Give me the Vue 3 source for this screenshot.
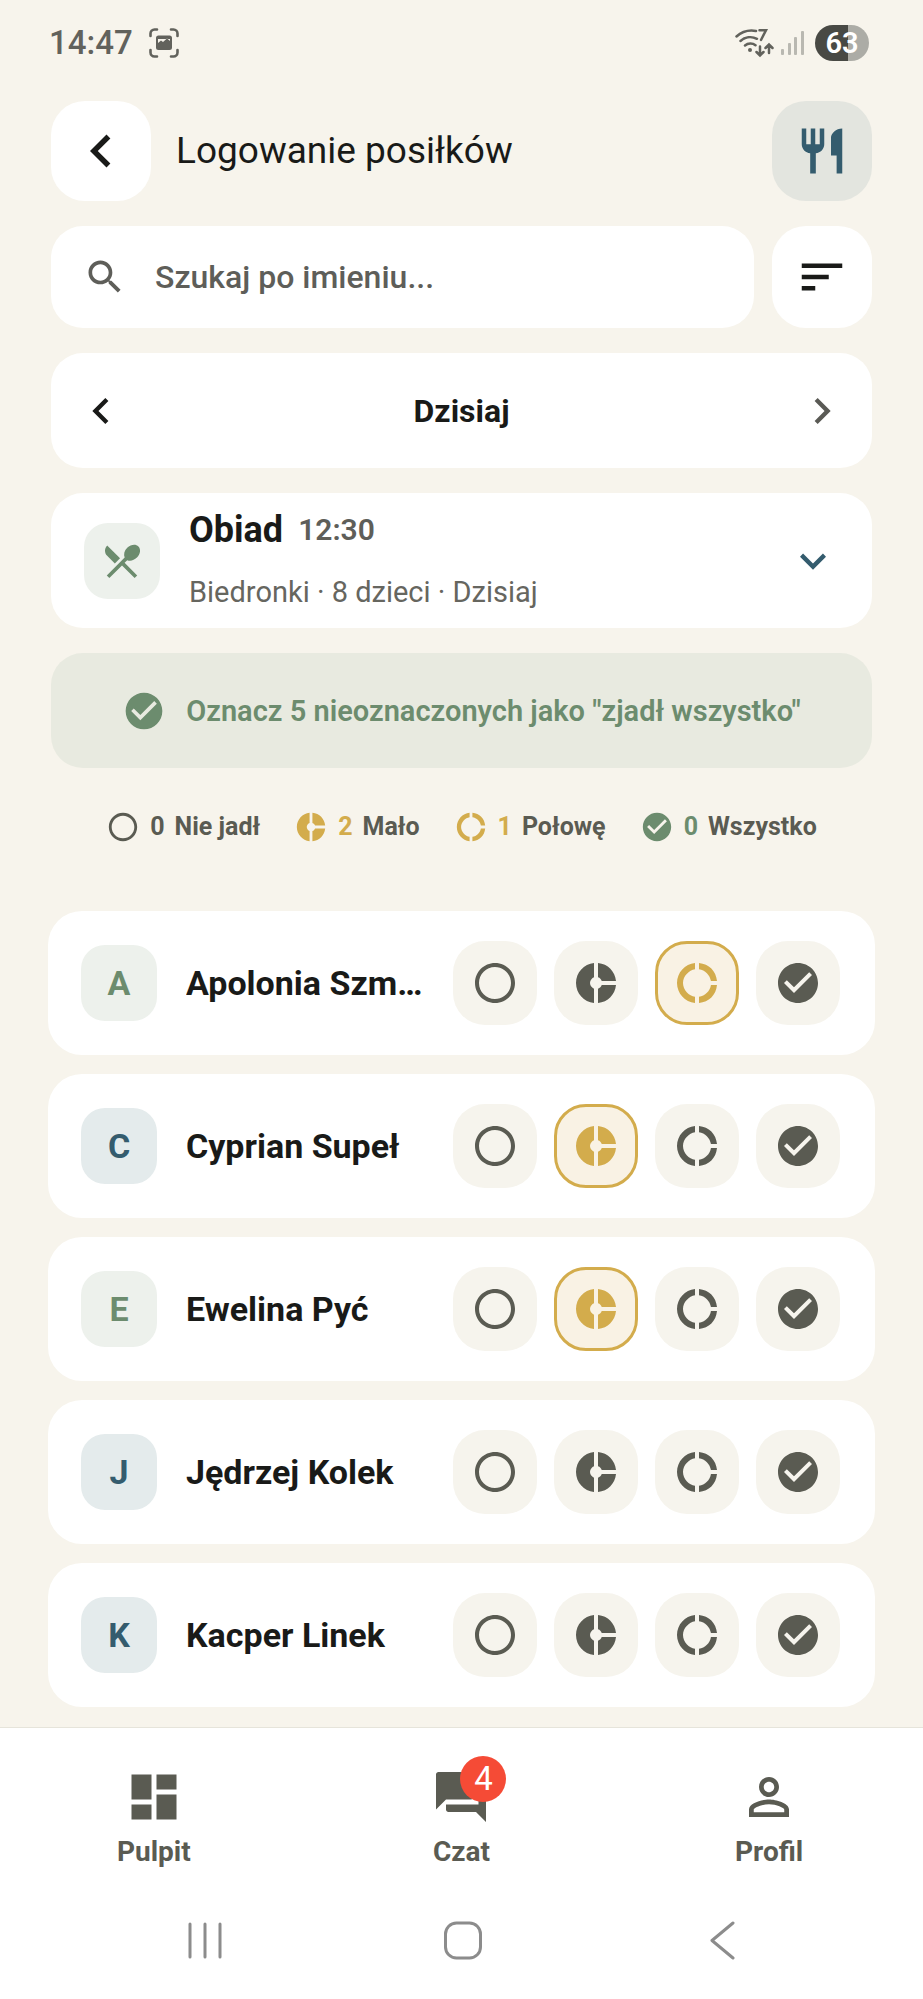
<script setup>
import { computed, ref } from 'vue'

const icons = {
  back: 'M15.41 7.41L14 6l-6 6 6 6 1.41-1.41L10.83 12z',
  forward: 'M10 6L8.59 7.41 13.17 12l-4.58 4.59L10 18l6-6z',
  expand: 'M16.59 8.59L12 13.17 7.41 8.59 6 10l6 6 6-6z',
  fork: 'M11 9H9V2H7v7H5V2H3v7c0 2.12 1.66 3.84 3.75 3.97V22h2.5v-9.03C11.34 12.84 13 11.12 13 9V2h-2v7zm5-3v8h2.5v8H21V2c-2.76 0-5 2.24-5 4z',
  search: 'M15.5 14h-.79l-.28-.27C15.41 12.59 16 11.11 16 9.5 16 5.91 13.09 3 9.5 3S3 5.91 3 9.5 5.91 16 9.5 16c1.61 0 3.09-.59 4.23-1.57l.27.28v.79l5 4.99L20.49 19l-4.99-5zm-6 0C7.01 14 5 11.99 5 9.5S7.01 5 9.5 5 14 7.01 14 9.5 11.99 14 9.5 14z',
  sort: 'M3 18h6v-2H3v2zM3 6v2h18V6H3zm0 7h12v-2H3v2z',
  lunch: 'M8.1 13.34l2.83-2.83L3.91 3.5c-1.56 1.56-1.56 4.09 0 5.66l4.19 4.18zm6.78-1.81c1.53.71 3.68.21 5.27-1.38 1.91-1.91 2.28-4.65.81-6.12-1.46-1.46-4.2-1.1-6.12.81-1.59 1.59-2.09 3.74-1.38 5.27L3.7 19.87l1.41 1.41L12 14.41l6.88 6.88 1.41-1.41L13.41 13l1.47-1.47z',
  none: 'M12 2C6.48 2 2 6.48 2 12s4.48 10 10 10 10-4.48 10-10S17.52 2 12 2zm0 18c-4.42 0-8-3.58-8-8s3.58-8 8-8 8 3.58 8 8-3.58 8-8 8z',
  little: 'M11 9.16V2c-5 .5-9 4.79-9 10s4 9.5 9 10v-7.16c-1-.41-2-1.52-2-2.84s1-2.43 2-2.84zM14.86 11H22c-.48-4.75-4-8.53-9-9v7.16c1 .3 1.52.98 1.86 1.84zM13 14.84V22c5-.47 8.52-4.25 9-9h-7.14c-.34.86-.86 1.54-1.86 1.84z',
  half: 'M11 5.08V2c-5 .5-9 4.81-9 10s4 9.5 9 10v-3.08c-3-.48-6-3.4-6-6.92s3-6.44 6-6.92zM18.97 11H22c-.47-5-4-8.53-9-9v3.08c3 .43 5.54 2.92 5.97 5.92zM13 18.92V22c5-.47 8.53-4 9-9h-3.03c-.43 3-2.97 5.49-5.97 5.92z',
  all: 'M12 2C6.48 2 2 6.48 2 12s4.48 10 10 10 10-4.48 10-10S17.52 2 12 2zm-2 15l-5-5 1.41-1.41L10 14.17l7.59-7.59L19 8l-9 9z',
  dashboard: 'M3 13h8V3H3v10zm0 8h8v-6H3v6zm10 0h8V11h-8v10zm0-18v6h8V3h-8z',
  chat: 'M21 6h-2v9H6v2c0 .55.45 1 1 1h11l4 4V7c0-.55-.45-1-1-1zm-4 6V3c0-.55-.45-1-1-1H3c-.55 0-1 .45-1 1v14l4-4h10c.55 0 1-.45 1-1z',
  profile: 'M12 5.9c1.16 0 2.1.94 2.1 2.1s-.94 2.1-2.1 2.1S9.9 9.16 9.9 8s.94-2.1 2.1-2.1m0 9c2.97 0 6.1 1.46 6.1 2.1v1.1H5.9V17c0-.64 3.13-2.1 6.1-2.1M12 4C9.79 4 8 5.79 8 8s1.79 4 4 4 4-1.79 4-4-1.79-4-4-4zm0 9c-2.67 0-8 1.34-8 4v3h16v-3c0-2.66-5.33-4-8-4z',
}

const options = [
  { key: 'none', label: 'Nie jadł' },
  { key: 'little', label: 'Mało' },
  { key: 'half', label: 'Połowę' },
  { key: 'all', label: 'Wszystko' },
]

const total = 8
const search = ref('')
const children = ref([
  { name: 'Apolonia Szm…', tone: 'green', meal: 'half' },
  { name: 'Cyprian Supeł', tone: 'blue', meal: 'little' },
  { name: 'Ewelina Pyć', tone: 'green', meal: 'little' },
  { name: 'Jędrzej Kolek', tone: 'blue', meal: null },
  { name: 'Kacper Linek', tone: 'blue', meal: null },
])

const visible = computed(() =>
  children.value.filter((c) => c.name.toLowerCase().includes(search.value.toLowerCase()))
)
const count = (key) => children.value.filter((c) => c.meal === key).length
const unmarked = computed(() => total - children.value.filter((c) => c.meal).length)
const pick = (child, key) => {
  child.meal = child.meal === key ? null : key
}
const markAll = () => {
  children.value.forEach((c) => {
    if (!c.meal) c.meal = 'all'
  })
}

const tabs = [
  { icon: 'dashboard', label: 'Pulpit' },
  { icon: 'chat', label: 'Czat', badge: 4 },
  { icon: 'profile', label: 'Profil' },
]
</script>

<template>
  <div class="screen">
    <div class="status">
      <span class="clock">14:47</span>
      <svg class="shot" viewBox="0 0 30 30" fill="none" stroke="currentColor" stroke-width="2.6" stroke-linecap="round">
        <path d="M1.5 8V5.500a4 4 0 0 1 4-4H8M22 1.500h2.500a4 4 0 0 1 4 4V8M28.500 22v2.500a4 4 0 0 1-4 4H22M8 28.500H5.500a4 4 0 0 1-4-4V22" />
        <path fill="currentColor" stroke="none" fill-rule="evenodd" d="M9.500 7.500h11a2.500 2.500 0 0 1 2.500 2.500v9.500a2.500 2.500 0 0 1-2.500 2.500h-11A2.500 2.500 0 0 1 7 19.500V10a2.500 2.500 0 0 1 2.500-2.500zM9 15l3-2.500 2 1.500 4-3.500 3 2.500v-2H9z" />
      </svg>
      <span class="spacer"></span>
      <svg class="wifi" viewBox="0 0 40 30" fill="none" stroke="currentColor" stroke-width="2.500" stroke-linecap="round">
        <path d="M1.500 8.500C7 3.500 14 1.800 21 3M5.500 13c4.500-4 11-5 16.500-2.200M10 17.500c3-2.500 7.500-2.600 10.500-.2M24.500 2.200H31L26 12" />
        <circle cx="15" cy="22" r="2" fill="currentColor" stroke="none" />
        <path d="M25 18.500v8.500M21.500 24l3.500 3.500 3.500-3.500M34 25v-8.500M30.500 20l3.500-3.500 3.500 3.500" />
      </svg>
      <svg class="signal" viewBox="0 0 24 26" fill="currentColor">
        <rect x="0" y="19" width="3" height="6" rx="1" />
        <rect x="7" y="13" width="3" height="12" rx="1" />
        <rect x="13" y="7" width="3" height="18" rx="1" />
        <rect x="20" y="1" width="3" height="24" rx="1" />
      </svg>
      <span class="battery">63</span>
    </div>

    <main class="content">
      <header class="row header">
        <button class="square" type="button" aria-label="Wstecz">
          <svg class="icon-back" viewBox="0 0 24 24"><path :d="icons.back" /></svg>
        </button>
        <h1>Logowanie posiłków</h1>
        <button class="square tinted" type="button" aria-label="Posiłki">
          <svg class="icon-tool" viewBox="0 0 24 24"><path :d="icons.fork" /></svg>
        </button>
      </header>

      <div class="row tools">
        <label class="search card">
          <svg class="icon-md" viewBox="0 0 24 24"><path :d="icons.search" /></svg>
          <input v-model="search" type="text" placeholder="Szukaj po imieniu..." aria-label="Szukaj po imieniu" />
        </label>
        <button class="square" type="button" aria-label="Sortuj">
          <svg class="icon-tool" viewBox="0 0 24 24"><path :d="icons.sort" /></svg>
        </button>
      </div>

      <div class="row card date">
        <button class="plain" type="button" aria-label="Poprzedni dzień">
          <svg class="icon-chevron" viewBox="0 0 24 24"><path :d="icons.back" /></svg>
        </button>
        <strong>Dzisiaj</strong>
        <button class="plain muted" type="button" aria-label="Następny dzień">
          <svg class="icon-chevron" viewBox="0 0 24 24"><path :d="icons.forward" /></svg>
        </button>
      </div>

      <button class="row card meal" type="button">
        <span class="tile green">
          <svg class="icon-md" viewBox="0 0 24 24"><path :d="icons.lunch" /></svg>
        </span>
        <span class="meal-text">
          <span class="meal-head"><strong>Obiad</strong><span class="time">12:30</span></span>
          <span class="meal-sub">Biedronki · 8 dzieci · Dzisiaj</span>
        </span>
        <svg class="icon-chevron accent" viewBox="0 0 24 24"><path :d="icons.expand" /></svg>
      </button>

      <button class="row banner" type="button" @click="markAll">
        <svg class="icon-md" viewBox="0 0 24 24"><path :d="icons.all" /></svg>
        <span>Oznacz {{ unmarked }} nieoznaczonych jako "zjadł wszystko"</span>
      </button>

      <ul class="legend">
        <li v-for="o in options" :key="o.key" :class="o.key">
          <svg class="icon-sm" viewBox="0 0 24 24"><path :d="icons[o.key]" /></svg>
          <span class="num">{{ count(o.key) }}</span>
          <span class="word">{{ o.label }}</span>
        </li>
      </ul>
    </main>

    <ul class="list">
      <li v-for="child in visible" :key="child.name" class="child">
        <span class="tile" :class="child.tone">{{ child.name[0] }}</span>
        <span class="name">{{ child.name }}</span>
        <span class="choices" role="group" :aria-label="child.name">
          <button
            v-for="o in options"
            :key="o.key"
            type="button"
            class="choice"
            :class="[o.key, { on: child.meal === o.key }]"
            :aria-label="o.label"
            :aria-pressed="child.meal === o.key"
            @click="pick(child, o.key)"
          >
            <svg class="icon-choice" viewBox="0 0 24 24"><path :d="icons[o.key]" /></svg>
          </button>
        </span>
      </li>
    </ul>

    <footer class="bottom">
      <nav class="tabs">
        <a v-for="t in tabs" :key="t.label" href="#" class="tab">
          <span class="tab-icon">
            <svg viewBox="0 0 24 24"><path :d="icons[t.icon]" /></svg>
            <span v-if="t.badge" class="badge">{{ t.badge }}</span>
          </span>
          <span>{{ t.label }}</span>
        </a>
      </nav>
      <div class="system">
        <button type="button" aria-label="Ostatnie">
          <svg viewBox="0 0 40 40"><path d="M5 4v33M20 4v33M35 4v33" /></svg>
        </button>
        <button type="button" aria-label="Ekran główny">
          <svg viewBox="0 0 40 40"><rect x="2.500" y="3" width="35" height="35" rx="11" /></svg>
        </button>
        <button type="button" aria-label="Cofnij">
          <svg viewBox="0 0 40 40"><path d="M31 3L10 20.500 31 38" /></svg>
        </button>
      </div>
    </footer>
  </div>
</template>

<style>
body {
  margin: 0;
  background: #f7f4ec;
}
</style>

<style scoped>
.screen {
  display: flex;
  flex-direction: column;
  min-height: 100vh;
  box-sizing: border-box;
  background: #f7f4ec;
  color: #191a18;
  font-family: Roboto, 'Liberation Sans', sans-serif;
}
.screen * {
  box-sizing: border-box;
}
button,
input {
  margin: 0;
  padding: 0;
  border: 0;
  background: none;
  color: inherit;
  font: inherit;
}
button {
  cursor: pointer;
}
ul {
  margin: 0;
  padding: 0;
  list-style: none;
}
svg {
  display: block;
  flex: none;
}
svg:not([fill]) {
  fill: currentColor;
}

.status {
  display: flex;
  align-items: center;
  height: 101px;
  padding: 0 54px 16px 49px;
  color: #62625c;
}
.clock {
  font-size: 33px;
  font-weight: 500;
}
.shot {
  width: 30px;
  height: 30px;
  margin-left: 16px;
}
.spacer {
  flex: 1;
}
.wifi {
  width: 40px;
  height: 30px;
}
.signal {
  width: 24px;
  height: 26px;
  margin: 0 10px 0 6px;
  color: #b9b8b1;
}
.battery {
  width: 54px;
  height: 36px;
  border-radius: 18px;
  background: linear-gradient(90deg, #484944 62%, #acaca6 62%);
  color: #fff;
  font-size: 29px;
  font-weight: 600;
  line-height: 36px;
  text-align: center;
}

.content {
  display: flex;
  flex-direction: column;
  gap: 25px;
  padding: 0 51px;
}
.row {
  display: flex;
  align-items: center;
}
.card {
  background: #fff;
  border-radius: 32px;
}
.square {
  display: flex;
  align-items: center;
  justify-content: center;
  flex: none;
  width: 100px;
  height: 100px;
  border-radius: 34px;
  background: #fff;
}
.tinted {
  background: #e3e5df;
  color: #345c6e;
}
h1 {
  flex: 1;
  margin: 0 0 0 25px;
  font-size: 37px;
  font-weight: 400;
  line-height: 48px;
}
.icon-back {
  width: 66px;
  height: 66px;
}
.icon-tool {
  width: 54px;
  height: 54px;
}
.icon-chevron {
  width: 52px;
  height: 52px;
}
.icon-md {
  width: 44px;
  height: 44px;
}
.icon-sm {
  width: 34px;
  height: 34px;
}
.icon-choice {
  width: 48px;
  height: 48px;
}

.tools {
  gap: 18px;
}
.tools .square {
  height: 102px;
}
.search {
  display: flex;
  flex: 1;
  align-items: center;
  gap: 28px;
  height: 102px;
  padding: 0 32px;
  color: #5e5e59;
}
.search input {
  flex: 1;
  min-width: 0;
  height: 48px;
  outline: 0;
  font-size: 32px;
  font-weight: 500;
}
.search input::placeholder {
  color: #5e5e59;
  opacity: 1;
}

.date {
  justify-content: space-between;
  height: 115px;
  padding: 0 24px;
  font-size: 32px;
}
.muted {
  color: #5a5a55;
}
.meal {
  min-height: 135px;
  padding: 0 33px;
  text-align: left;
}
.tile {
  display: flex;
  align-items: center;
  justify-content: center;
  flex: none;
  width: 76px;
  height: 76px;
  border-radius: 24px;
  font-size: 34px;
  font-weight: 700;
}
.green {
  background: #edf1ec;
  color: #6c8c6e;
}
.blue {
  background: #e4ebec;
  color: #345c6e;
}
.meal-text {
  display: flex;
  flex: 1;
  flex-direction: column;
  gap: 24px;
  margin-left: 29px;
  padding-bottom: 3px;
}
.meal-head {
  display: flex;
  align-items: center;
  gap: 15px;
  font-size: 36px;
  line-height: 42px;
}
.time {
  color: #5e5e59;
  font-size: 30px;
  font-weight: 600;
}
.meal-sub {
  color: #66665f;
  font-size: 29px;
  line-height: 34px;
}
.accent {
  color: #345c6e;
}

.banner {
  justify-content: center;
  gap: 20px;
  height: 115px;
  border-radius: 32px;
  background: #e8eae0;
  color: #6c8c6e;
  font-size: 29px;
  font-weight: 600;
}

.legend {
  display: flex;
  justify-content: center;
  gap: 34px;
  margin: 16px 0;
  color: #5a5b52;
  font-size: 25px;
  font-weight: 700;
  line-height: 36px;
}
.legend li {
  display: flex;
  align-items: center;
  gap: 10px;
}
.word {
  color: #5a5b52;
}
.legend .little,
.legend .half {
  color: #d3ac4c;
}
.legend .all {
  color: #6c8c6e;
}

.list {
  display: flex;
  flex: 1;
  flex-direction: column;
  gap: 19px;
  padding: 50px 48px 20px;
}
.child {
  display: flex;
  align-items: center;
  height: 144px;
  padding: 0 35px 0 33px;
  border-radius: 34px;
  background: #fff;
}
.name {
  flex: 1;
  min-width: 0;
  margin: 0 20px 0 29px;
  overflow: hidden;
  font-size: 34px;
  font-weight: 700;
  line-height: 44px;
  text-overflow: ellipsis;
  white-space: nowrap;
}
.choices {
  display: flex;
  gap: 17px;
}
.choice {
  display: flex;
  align-items: center;
  justify-content: center;
  width: 84px;
  height: 84px;
  border: 3px solid transparent;
  border-radius: 32px;
  background: #f6f4ed;
  color: #5a5b52;
}
.choice.on {
  border-color: #d3ac4c;
  background: #f9f2e4;
  color: #d3ac4c;
}
.choice.all.on {
  border-color: #6c8c6e;
  background: #edf1ec;
  color: #6c8c6e;
}

.bottom {
  border-top: 1px solid #e6e4db;
  background: #fff;
}
.tabs {
  display: grid;
  grid-template-columns: repeat(3, 1fr);
  padding-top: 39px;
}
.tab {
  display: flex;
  flex-direction: column;
  align-items: center;
  gap: 7px;
  color: #5a5b52;
  font-size: 28px;
  font-weight: 700;
  line-height: 36px;
  text-decoration: none;
}
.tab-icon {
  position: relative;
}
.tab-icon svg {
  width: 60px;
  height: 60px;
}
.badge {
  position: absolute;
  top: -11px;
  right: -15px;
  width: 46px;
  height: 46px;
  border-radius: 23px;
  background: #f54b36;
  color: #fff;
  font-size: 33px;
  font-weight: 400;
  line-height: 46px;
  text-align: center;
}
.system {
  display: grid;
  grid-template-columns: repeat(3, 1fr);
  padding: 50px 72px 39px 76px;
}
.system button {
  display: flex;
  justify-content: center;
}
.system svg {
  width: 40px;
  height: 40px;
  fill: none;
  stroke: #8c8c8c;
  stroke-width: 3;
  stroke-linecap: round;
  stroke-linejoin: round;
}
</style>
